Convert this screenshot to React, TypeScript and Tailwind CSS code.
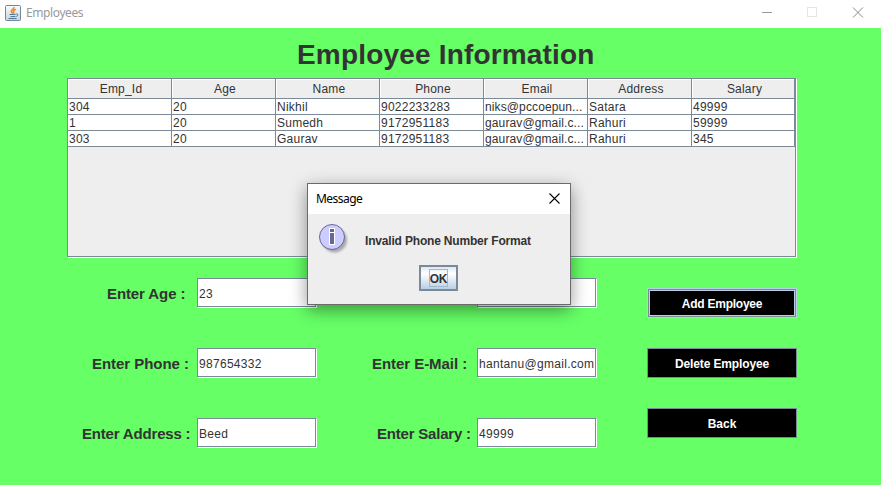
import type { ReactNode } from "react";

const columns = ["Emp_Id", "Age", "Name", "Phone", "Email", "Address", "Salary"];
const rows = [
  ["304", "20", "Nikhil", "9022233283", "niks@pccoepun...", "Satara", "49999"],
  ["1", "20", "Sumedh", "9172951183", "gaurav@gmail.c...", "Rahuri", "59999"],
  ["303", "20", "Gaurav", "9172951183", "gaurav@gmail.c...", "Rahuri", "345"],
];

function JavaIcon() {
  return (
    <svg width="16" height="16" viewBox="0 0 16 16">
      <defs>
        <linearGradient id="java-bg" x1="0" y1="0" x2="0" y2="1">
          <stop offset="0" stopColor="#fafbfc" />
          <stop offset="1" stopColor="#c9d3dc" />
        </linearGradient>
      </defs>
      <rect x="0.5" y="0.5" width="15" height="15" rx="1" fill="url(#java-bg)" stroke="#71889b" />
      <path d="M9 2C9.400 4 6 4.600 6.300 6.500c.1.900 1.200 1.300 1.400 2.100M10.800 4.200C8.800 4.900 7.900 5.800 8.700 7c.4.700.1 1.100-.3 1.600" fill="none" stroke="#ee8428" strokeWidth="1.500" />
      <path d="M4.500 9.500h6M5.500 11.500h4.800M3.500 13.500h8" stroke="#54788f" strokeWidth="1" />
      <path d="M10.800 9.100c3-.6 2.500 2-.1 2.500" fill="none" stroke="#54788f" />
    </svg>
  );
}

function InfoIcon() {
  return (
    <svg className="block" width="32" height="32" viewBox="0 0 32 32">
      <defs>
        <filter id="icon-shadow" x="-30%" y="-30%" width="160%" height="160%">
          <feGaussianBlur stdDeviation="1.3" />
        </filter>
      </defs>
      <circle cx="15.500" cy="16" r="12.500" fill="#999" opacity="0.8" filter="url(#icon-shadow)" />
      <circle cx="13" cy="13" r="12.500" fill="#ccccff" stroke="#666699" />
      <rect x="10.500" y="4.500" width="5" height="16" fill="#666699" stroke="#fff" />
      <path d="M11 8.500h4" stroke="#fff" />
    </svg>
  );
}

function Field({ children }: { children?: ReactNode }) {
  return (
    <div className="h-[30px] w-[120px] shrink-0 border-t border-l border-r border-b border-t-[#7a8a99] border-l-[#7a8a99] border-r-white border-b-white bg-white">
      <div className="flex h-full items-center border-r border-b border-[#7a8a99] pt-[2px] pl-px text-[12px] tracking-[0.3px] whitespace-nowrap">
        {children}
      </div>
    </div>
  );
}

function Label({ className, children }: { className: string; children: ReactNode }) {
  return <div className={`shrink-0 pt-[2px] text-[15px] leading-[18px] font-bold whitespace-nowrap ${className}`}>{children}</div>;
}

export default function App() {
  return (
    <div className="relative flex h-[485px] w-[881px] flex-col overflow-hidden bg-[#66ff66] font-['Liberation_Sans',Arial,sans-serif] text-[#333333]">
      <header className="flex h-7 shrink-0 items-center bg-white pb-[3px] pl-[5px] text-[#999999]">
        <JavaIcon />
        <span className="ml-[5px] flex-1 font-['Noto_Sans',sans-serif] text-[12px] tracking-[-0.4px]">Employees</span>
        <svg width="110" height="11" viewBox="0 0 110 11" fill="none" shapeRendering="crispEdges" className="mr-[9px]">
          <path d="M0 5.500h10" stroke="#999" />
          <rect x="45.500" y="0.500" width="9" height="9" stroke="#e5e5e5" />
          <path d="M91 0.500l10 10M101 0.500l-10 10" stroke="#888" shapeRendering="auto" />
        </svg>
      </header>

      <h1 className="mt-[10px] ml-[297px] h-10 shrink-0 text-[28px] leading-[34px] font-bold tracking-[0.18px] whitespace-nowrap">Employee Information</h1>

      <section className="ml-[67px] h-[180px] w-[730px] shrink-0 border-t border-l border-r border-b border-t-[#7a8a99] border-l-[#7a8a99] border-r-white border-b-white">
        <div className="h-full border-r border-b border-[#7a8a99] bg-[#eeeeee] text-[12px]">
          <div className="grid h-5 grid-cols-[repeat(6,104px)_103px]">
            {columns.map((c) => (
              <div key={c} className="border-r border-b border-[#7a8a99]">
                <div className="flex h-full items-center justify-center border-t border-l border-white pt-px pl-[2px] leading-[17px] tracking-[0.2px]">{c}</div>
              </div>
            ))}
          </div>
          {rows.map((r) => (
            <div key={r[0]} className="grid h-4 grid-cols-[repeat(6,104px)_103px] bg-white">
              {r.map((v, i) => (
                <div key={i} className={`h-4 border-r border-b border-[#7a8a99] pl-px leading-[17px] whitespace-nowrap ${i === 4 ? "tracking-[0.12px]" : "tracking-[0.25px]"}`}>{v}</div>
              ))}
            </div>
          ))}
        </div>
      </section>

      <main className="mt-5 flex">
        <div className="flex w-[647px] flex-col gap-10">
          <div className="flex h-[30px] items-center">
            <Label className="ml-[107px] w-[90px] tracking-[-0.1px]">Enter Age :</Label>
            <Field>23</Field>
            <div className="w-[160px]" />
            <Field />
          </div>
          <div className="flex h-[30px] items-center">
            <Label className="ml-[92px] w-[105px] tracking-[-0.05px]">Enter Phone :</Label>
            <Field>987654332</Field>
            <Label className="ml-[55px] w-[105px] tracking-[-0.05px]">Enter E-Mail :</Label>
            <Field>hantanu@gmail.com</Field>
          </div>
          <div className="flex h-[30px] items-center">
            <Label className="ml-[82px] w-[115px] tracking-[-0.18px]">Enter Address :</Label>
            <Field>Beed</Field>
            <Label className="ml-[60px] w-[100px] tracking-[-0.2px]">Enter Salary :</Label>
            <Field>49999</Field>
          </div>
        </div>
        <div className="mt-[10px] flex w-[150px] flex-col gap-[30px] text-[12px] font-bold text-white">
          <button className="h-[30px] border border-[#b8cfe5] bg-black">
            <span className="flex h-full items-center justify-center border border-[#7a8a99]">
              <span className="flex h-full w-full items-center justify-center border border-[#b8cfe5] pt-[2px] tracking-[-0.25px]">Add Employee</span>
            </span>
          </button>
          <button className="h-[30px] border border-[#7a8a99] bg-black pt-[2px] tracking-[-0.13px]">Delete Employee</button>
          <button className="h-[30px] border border-[#7a8a99] bg-black pt-[2px]">Back</button>
        </div>
      </main>

      <div role="dialog" className="absolute top-[183px] left-[307px] flex h-[122px] w-[264px] flex-col border border-[#6b6b6b] bg-[#eeeeee] shadow-[0_5px_16px_rgba(0,0,0,0.42)]">
        <div className="flex h-[30px] shrink-0 items-center justify-between bg-white pr-[10px] pl-2 text-black">
          <span className="font-['Noto_Sans',sans-serif] text-[12px] tracking-[-0.55px]">Message</span>
          <svg className="mb-[2px]" width="11" height="11" viewBox="0 0 11 11" fill="none">
            <path d="M0.500 0.500l10 10M10.500 0.500l-10 10" stroke="#000" strokeWidth="1.100" />
          </svg>
        </div>
        <div className="flex h-[51px] shrink-0 pt-[10px] pl-[11px]">
          <InfoIcon />
          <span className="mt-[9px] ml-[14px] text-[12px] leading-4 font-bold tracking-[-0.18px] whitespace-nowrap">Invalid Phone Number Format</span>
        </div>
        <button className="ml-[111px] flex h-[26px] w-[39px] items-center justify-center border-2 border-[#7a8a99] bg-linear-to-b from-[#dde8f3] via-white via-30% to-[#b8cfe5] text-[12px] font-bold">
          <span className="flex h-[18px] w-[19px] items-center justify-center border border-[#a3b8cc] pt-[2px] tracking-[-0.2px]">OK</span>
        </button>
      </div>
    </div>
  );
}
